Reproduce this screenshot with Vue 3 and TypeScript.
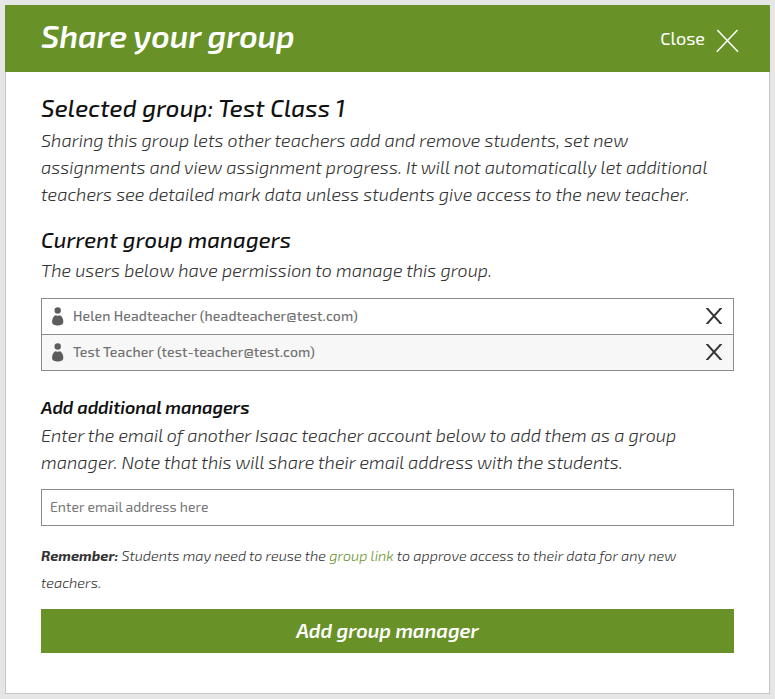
<script setup lang="ts">
import { ref } from 'vue'

interface Manager {
  name: string
  email: string
}

const groupName = ref('Test Class 1')
const email = ref('')
const managers = ref<Manager[]>([
  { name: 'Helen Headteacher', email: 'headteacher@test.com' },
  { name: 'Test Teacher', email: 'test-teacher@test.com' },
])

function removeManager(index: number) {
  managers.value.splice(index, 1)
}
</script>

<template>
  <div class="backdrop">
    <section class="modal">
      <header class="modal-header">
        <h1>Share your group</h1>
        <button class="close" type="button">
          <span>Close</span>
          <svg width="24" height="24" viewBox="0 0 24 24">
            <path d="M1.3 1 22 22.7M21.5 1 .8 22.7" fill="none" stroke="#fff" stroke-width="1.5" />
          </svg>
        </button>
      </header>
      <div class="modal-body">
        <h2>Selected group: {{ groupName }}</h2>
        <p class="lead">
          Sharing this group lets other teachers add and remove students, set new<br />
          assignments and view assignment progress. It will not automatically let additional<br />
          teachers see detailed mark data unless students give access to the new teacher.
        </p>
        <h2 class="current">Current group managers</h2>
        <p class="lead">The users below have permission to manage this group.</p>
        <ul class="managers">
          <li v-for="(m, i) in managers" :key="m.email">
            <svg class="person" width="12" height="19" viewBox="0 0 12 19">
              <circle cx="5.7" cy="3.5" r="3.2" />
              <path d="M3.2 8.3Q5.7 9.2 8.2 8.3C10.2 9.6 11.4 12.2 11.3 14.9 11.2 17.5 8.6 18.4 5.7 18.4S.2 17.5.1 14.9C0 12.2 1.2 9.6 3.2 8.3Z" />
            </svg>
            <span class="manager">{{ m.name }} ({{ m.email }})</span>
            <button class="remove" type="button" aria-label="Remove" @click="removeManager(i)">
              <svg width="16" height="16" viewBox="0 0 16 16">
                <path d="M0 .5H2.2M13.8 .5H16M0 15.5H2.2M13.8 15.5H16" stroke="#444" />
                <path d="M1.3 .5 14.7 15.5M14.7 .5 1.3 15.5" fill="none" stroke="#333" stroke-width="1.9" />
              </svg>
            </button>
          </li>
        </ul>
        <h3>Add additional managers</h3>
        <p class="lead">
          Enter the email of another Isaac teacher account below to add them as a group<br />
          manager. Note that this will share their email address with the students.
        </p>
        <input v-model="email" type="email" placeholder="Enter email address here" />
        <p class="note">
          <b>Remember:</b> Students may need to reuse the <a>group link</a> to approve access to their data for any new<br />
          teachers.
        </p>
        <button class="submit" type="button">Add group manager</button>
      </div>
    </section>
  </div>
</template>

<style>
body {
  background: #e6e6e6;
}
</style>

<style scoped>
* {
  box-sizing: border-box;
  margin: 0;
}
.backdrop {
  height: 699px;
  padding: 5px;
  overflow: hidden;
  font-family: "Exo 2", Roboto, "Open Sans", sans-serif;
  color: #333;
  white-space: nowrap;
}
.modal {
  height: 689px;
  background: #fff;
  border: 1px solid #c6c6c6;
  border-top: 0;
}
.modal-header {
  display: flex;
  justify-content: space-between;
  height: 67px;
  margin: 0 -1px;
  padding: 0 30px 0 36px;
  background: #689228;
  color: #fff;
}
h1 {
  font-size: 32px;
  line-height: 60px;
  letter-spacing: -0.1px;
  font-weight: 600;
  font-style: italic;
}
button {
  padding: 0;
  border: 0;
  background: none;
  font-family: inherit;
  color: inherit;
}
.close {
  display: flex;
  align-items: center;
  gap: 11px;
  height: 71px;
  font-size: 18px;
}
.close span {
  line-height: 20px;
  padding-bottom: 6px;
}
.modal-body {
  padding: 18px 35px 0;
}
h2 {
  font-size: 24px;
  line-height: 36px;
  letter-spacing: 0.15px;
  font-weight: 500;
  font-style: italic;
  color: #111;
}
.lead {
  font-size: 18px;
  line-height: 27px;
  font-weight: 300;
  font-style: italic;
}
h2 + .lead {
  padding-top: 1px;
}
.current {
  margin-top: 14px;
  font-size: 22px;
  line-height: 34px;
}
.managers {
  margin-top: 14px;
  padding: 0;
  list-style: none;
  border: 1px solid #8c8c8c;
}
.managers li {
  display: flex;
  align-items: center;
  height: 35px;
  padding: 0 11px 1px 10px;
}
.managers li + li {
  height: 36px;
  border-top: 1px solid #8c8c8c;
  background: #f7f7f7;
}
.person {
  margin-top: 1px;
  fill: #5d5d5d;
}
.manager {
  margin-left: 9px;
  font-size: 14px;
  line-height: 20px;
  letter-spacing: 0.1px;
  font-weight: 500;
  color: #707070;
}
.remove {
  display: flex;
  margin-left: auto;
}
h3 {
  margin-top: 22px;
  font-size: 18px;
  line-height: 28px;
  letter-spacing: -0.07px;
  font-weight: 600;
  font-style: italic;
  color: #111;
}
h3 + .lead {
  padding-top: 1px;
}
input {
  display: block;
  width: 100%;
  height: 37px;
  margin-top: 13px;
  padding: 0 8px 2px;
  border: 1px solid #8c8c8c;
  border-radius: 0;
  font-family: inherit;
  font-size: 14px;
  letter-spacing: 0.03px;
}
input::placeholder {
  color: #757575;
  opacity: 1;
}
.note {
  margin-top: 16px;
  font-size: 14.42px;
  line-height: 27px;
  font-weight: 300;
  font-style: italic;
}
.note b {
  font-weight: 700;
}
.note a {
  color: #689228;
}
.submit {
  display: block;
  width: 100%;
  height: 44px;
  margin-top: 13px;
  padding-bottom: 2px;
  background: #689228;
  color: #fff;
  font-size: 20px;
  letter-spacing: -0.05px;
  font-weight: 600;
  font-style: italic;
}
</style>
